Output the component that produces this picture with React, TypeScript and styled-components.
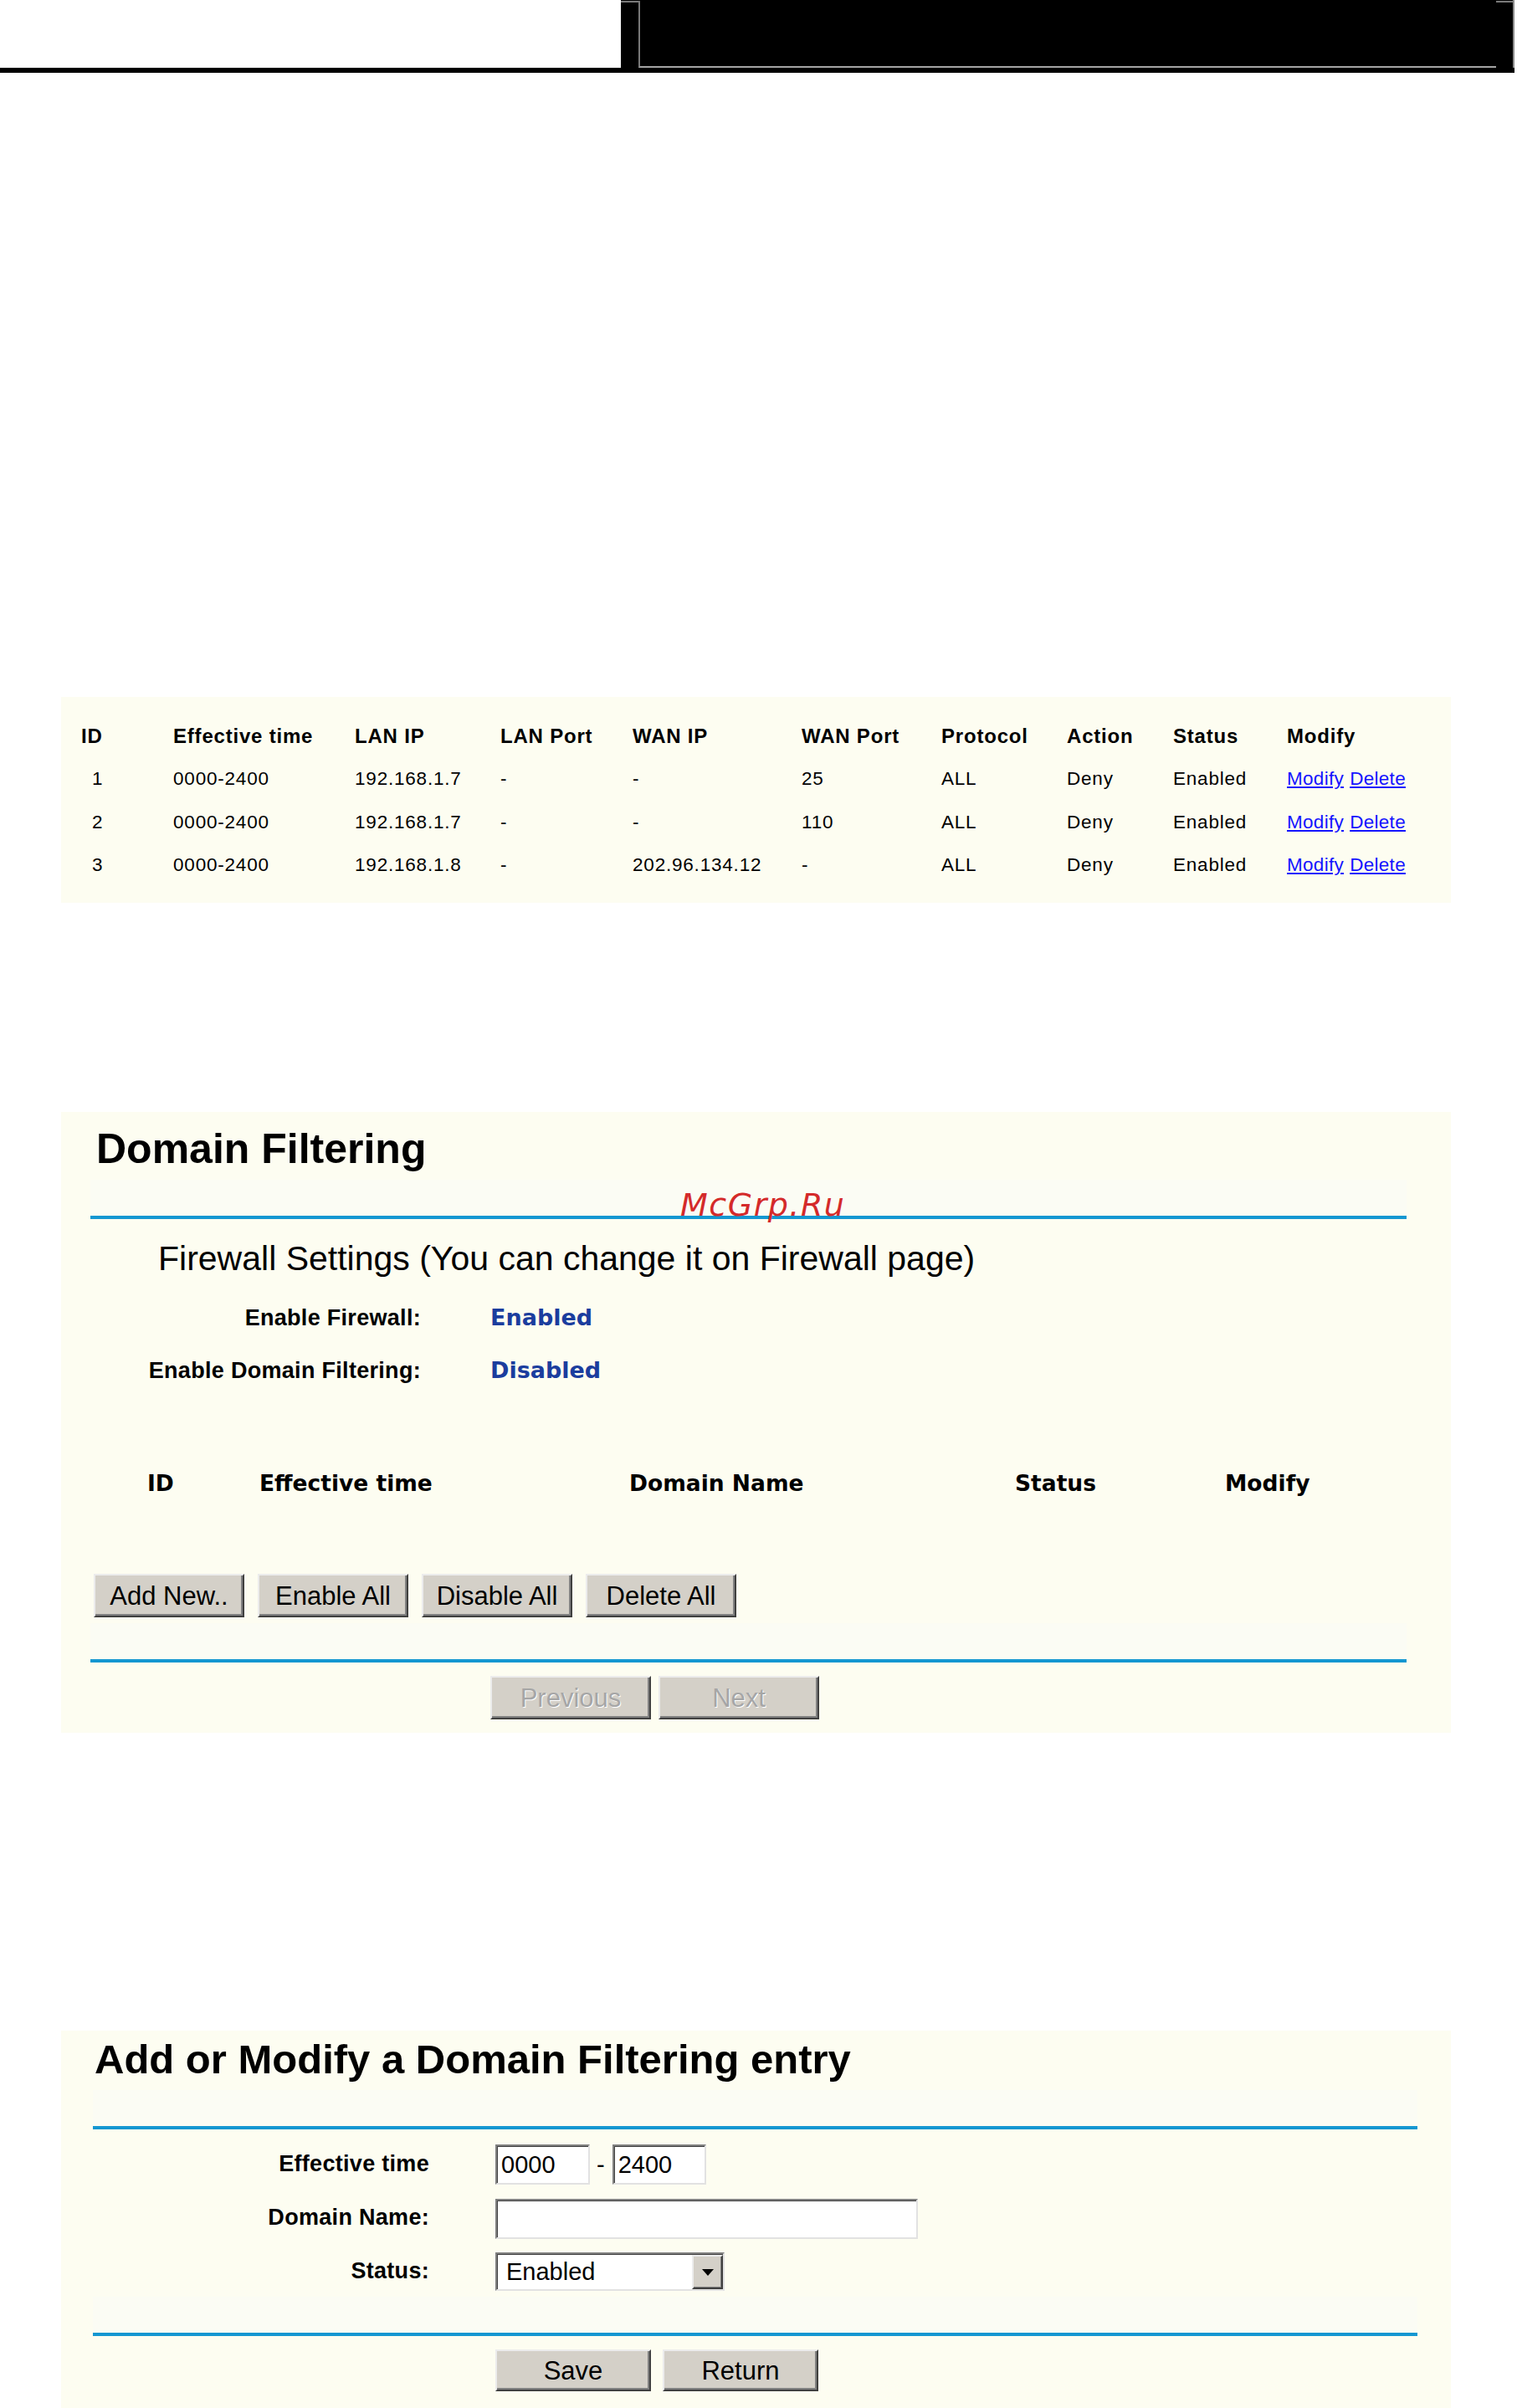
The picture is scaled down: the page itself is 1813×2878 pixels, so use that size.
import React from "react";
import styled, { createGlobalStyle } from "styled-components";

const SANS = `"Liberation Sans", Arial, sans-serif`;
const WIDE = `"DejaVu Sans", Verdana, sans-serif`;

const Global = createGlobalStyle`
  html, body { margin: 0; padding: 0; background: #fff; overflow: hidden; }
  body { font-family: ${SANS}; color: #000; }
  * { box-sizing: border-box; }
`;

const Page = styled.div`
  width: 1813px;
  height: 2878px;
`;

/* ---------- top header ---------- */
const TopBar = styled.header`
  display: flex;
  height: 81px;
`;
const TopBlank = styled.div`
  width: 742px;
`;
const TopBox = styled.div`
  position: relative;
  width: 1068px;
  background: #000;
  display: flex;
  padding: 1px 20px 0 21px;
  border-right: 2px solid #8a8a8a;
  &::before,
  &::after {
    content: "";
    position: absolute;
    top: 1px;
    height: 2px;
    background: #7a7a7a;
  }
  &::before { left: 0; width: 21px; }
  &::after { right: 0; width: 20px; }
`;
const TopFrame = styled.div`
  flex: 1;
  border-left: 2px solid #777;
  border-bottom: 2px solid #a4a4a4;
`;
const TopRule = styled.div`
  width: 1810px;
  height: 6px;
  background: #000;
`;

/* ---------- panels ---------- */
const Panel = styled.section<{ $mt: number; $h: number }>`
  position: relative;
  margin: ${(p) => p.$mt}px 0 0 73px;
  width: 1661px;
  height: ${(p) => p.$h}px;
  background: #fdfdf1;
`;

/* ---------- rule table (panel 1) ---------- */
const RuleTable = styled.div`
  display: grid;
  grid-template-columns: 110px 217px 174px 158px 202px 167px 150px 127px 136px 1fr;
  padding: 20.5px 0 0 24px;
`;
const HeadCell = styled.div`
  font: 700 24px/51.5px ${SANS};
  letter-spacing: 0.8px;
  white-space: nowrap;
`;
const DataCell = styled.div<{ $indent?: number }>`
  font: 400 22.5px/51.5px ${SANS};
  letter-spacing: 0.8px;
  white-space: nowrap;
  padding-left: ${(p) => p.$indent ?? 0}px;
`;
const RowLink = styled.a`
  color: #1414ff;
  text-decoration: underline;
  letter-spacing: 0.3px;
  cursor: pointer;
`;

/* ---------- shared page bits ---------- */
const PageTitle = styled.h1<{ $size: number; $pt: number; $pl: number }>`
  margin: 0;
  padding: ${(p) => p.$pt}px 0 0 ${(p) => p.$pl}px;
  font: 700 ${(p) => p.$size}px/60px ${SANS};
  white-space: nowrap;
`;
const Divider = styled.div<{ $ml: number; $w: number; $mt: number }>`
  margin: ${(p) => p.$mt}px 0 0 ${(p) => p.$ml}px;
  width: ${(p) => p.$w}px;
  height: 47px;
  background: #fbfcf4;
  border-bottom: 4px solid #1497d1;
`;
const Watermark = styled.span`
  position: absolute;
  top: 92px;
  left: 740px;
  font: italic 400 38px/38px ${WIDE};
  letter-spacing: 1.5px;
  color: #d42a2a;
  white-space: nowrap;
`;
const SubTitle = styled.h2`
  margin: 21.8px 0 0;
  padding-left: 116px;
  font: 400 41px/50px ${SANS};
  white-space: nowrap;
`;
const SettingList = styled.div`
  margin-top: 14px;
`;
const SettingRow = styled.div`
  display: flex;
  align-items: baseline;
  height: 63px;
`;
const SettingLabel = styled.span`
  width: 430px;
  flex: none;
  text-align: right;
  font: 700 27px/63px ${SANS};
  letter-spacing: 0.3px;
  white-space: nowrap;
`;
const SettingValue = styled.span`
  margin-left: 83px;
  font: 700 27px/63px ${WIDE};
  color: #1b3d9e;
`;
const ColumnHead = styled.div`
  display: flex;
  margin-top: 74px;
  padding-left: 103px;
  height: 60px;
`;
const ColumnTitle = styled.span<{ $w?: number }>`
  flex: none;
  width: ${(p) => (p.$w ? `${p.$w}px` : "auto")};
  font: 700 26.5px/60px ${WIDE};
  white-space: nowrap;
`;
const ButtonRow = styled.div<{ $mt: number; $pl: number; $gap: number }>`
  display: flex;
  gap: ${(p) => p.$gap}px;
  margin-top: ${(p) => p.$mt}px;
  padding-left: ${(p) => p.$pl}px;
`;
const WinButton = styled.button<{ $w: number; $h: number; $off?: boolean }>`
  width: ${(p) => p.$w}px;
  height: ${(p) => p.$h}px;
  flex: none;
  padding: 2px 0 0;
  background: #d4d0c8;
  border: 2px solid;
  border-color: #ececec #404040 #404040 #ececec;
  box-shadow: inset -2px -2px 0 #808080;
  font: 400 31px ${SANS};
  color: ${(p) => (p.$off ? "#a6a6a6" : "#000")};
  text-shadow: ${(p) => (p.$off ? "1px 1px 0 #fff" : "none")};
  white-space: nowrap;
  cursor: default;
`;

/* ---------- form (panel 3) ---------- */
const Form = styled.div`
  display: flex;
  flex-direction: column;
  gap: 16.5px;
  margin-top: 18px;
`;
const FormRow = styled.div<{ $h: number }>`
  display: flex;
  align-items: center;
  height: ${(p) => p.$h}px;
`;
const FormLabel = styled.span`
  width: 440px;
  flex: none;
  text-align: right;
  padding-bottom: 2px;
  font: 700 27px/1 ${SANS};
  letter-spacing: 0.3px;
  white-space: nowrap;
`;
const FormControls = styled.div`
  display: flex;
  align-items: center;
  margin-left: 79px;
`;
const TextInput = styled.input<{ $w: number }>`
  width: ${(p) => p.$w}px;
  height: 48px;
  padding: 0 0 0 5px;
  background: #fff;
  border: 2px solid;
  border-color: #808080 #e2e2e2 #e2e2e2 #808080;
  box-shadow: inset 1px 1px 0 #404040;
  font: 400 29px ${SANS};
  color: #000;
  outline: none;
`;
const TimeSep = styled.span`
  margin: 0 9px 0 8px;
  font: 400 29px ${SANS};
`;
const SelectBox = styled.div`
  width: 274px;
  height: 46px;
  display: flex;
  background: #fff;
  border: 2px solid;
  border-color: #808080 #e2e2e2 #e2e2e2 #808080;
  box-shadow: inset 1px 1px 0 #404040;
`;
const SelectText = styled.span`
  flex: 1;
  padding-left: 11px;
  font: 400 29px/42px ${SANS};
`;
const SelectArrow = styled.span`
  width: 37px;
  margin: 1px 0 0;
  display: flex;
  align-items: center;
  justify-content: center;
  background: #d4d0c8;
  border: 2px solid;
  border-color: #ececec #404040 #404040 #ececec;
  box-shadow: inset -1px -1px 0 #808080;
`;

const rules = [
  ["1", "0000-2400", "192.168.1.7", "-", "-", "25", "ALL", "Deny", "Enabled"],
  ["2", "0000-2400", "192.168.1.7", "-", "-", "110", "ALL", "Deny", "Enabled"],
  ["3", "0000-2400", "192.168.1.8", "-", "202.96.134.12", "-", "ALL", "Deny", "Enabled"],
];
const ruleHeads = ["ID", "Effective time", "LAN IP", "LAN Port", "WAN IP", "WAN Port", "Protocol", "Action", "Status", "Modify"];

export default function App() {
  return (
    <Page>
      <Global />
      <TopBar>
        <TopBlank />
        <TopBox>
          <TopFrame />
        </TopBox>
      </TopBar>
      <TopRule />

      <Panel $mt={746} $h={246}>
        <RuleTable>
          {ruleHeads.map((h) => (
            <HeadCell key={h}>{h}</HeadCell>
          ))}
          {rules.map((r) => (
            <React.Fragment key={r[0]}>
              {r.map((v, i) => (
                <DataCell key={i} $indent={i === 0 ? 13 : 0}>
                  {v}
                </DataCell>
              ))}
              <DataCell>
                <RowLink>Modify</RowLink> <RowLink>Delete</RowLink>
              </DataCell>
            </React.Fragment>
          ))}
        </RuleTable>
      </Panel>

      <Panel $mt={250} $h={742}>
        <PageTitle $size={50} $pt={14} $pl={42}>Domain Filtering</PageTitle>
        <Divider $ml={35} $w={1573} $mt={7} />
        <Watermark>McGrp.Ru</Watermark>
        <SubTitle>Firewall Settings (You can change it on Firewall page)</SubTitle>
        <SettingList>
          <SettingRow>
            <SettingLabel>Enable Firewall:</SettingLabel>
            <SettingValue>Enabled</SettingValue>
          </SettingRow>
          <SettingRow>
            <SettingLabel>Enable Domain Filtering:</SettingLabel>
            <SettingValue>Disabled</SettingValue>
          </SettingRow>
        </SettingList>
        <ColumnHead>
          <ColumnTitle $w={134}>ID</ColumnTitle>
          <ColumnTitle $w={442}>Effective time</ColumnTitle>
          <ColumnTitle $w={461}>Domain Name</ColumnTitle>
          <ColumnTitle $w={251}>Status</ColumnTitle>
          <ColumnTitle>Modify</ColumnTitle>
        </ColumnHead>
        <ButtonRow $mt={78} $pl={39} $gap={16}>
          <WinButton $w={180} $h={52}>Add New..</WinButton>
          <WinButton $w={180} $h={52}>Enable All</WinButton>
          <WinButton $w={180} $h={52}>Disable All</WinButton>
          <WinButton $w={180} $h={52}>Delete All</WinButton>
        </ButtonRow>
        <Divider $ml={35} $w={1573} $mt={7} />
        <ButtonRow $mt={16} $pl={513} $gap={9}>
          <WinButton $w={192} $h={52} $off>Previous</WinButton>
          <WinButton $w={192} $h={52} $off>Next</WinButton>
        </ButtonRow>
      </Panel>

      <Panel $mt={356} $h={451}>
        <PageTitle $size={49} $pt={4} $pl={40}>Add or Modify a Domain Filtering entry</PageTitle>
        <Divider $ml={38} $w={1583} $mt={7} />
        <Form>
          <FormRow $h={48}>
            <FormLabel>Effective time</FormLabel>
            <FormControls>
              <TextInput $w={113} defaultValue="0000" readOnly />
              <TimeSep>-</TimeSep>
              <TextInput $w={112} defaultValue="2400" readOnly />
            </FormControls>
          </FormRow>
          <FormRow $h={48}>
            <FormLabel>Domain Name:</FormLabel>
            <FormControls>
              <TextInput $w={505} defaultValue="" readOnly />
            </FormControls>
          </FormRow>
          <FormRow $h={46}>
            <FormLabel>Status:</FormLabel>
            <FormControls>
              <SelectBox>
                <SelectText>Enabled</SelectText>
                <SelectArrow>
                  <svg width="14" height="8" viewBox="0 0 14 8">
                    <path d="M0 0 H14 L7 8 Z" fill="#000" />
                  </svg>
                </SelectArrow>
              </SelectBox>
            </FormControls>
          </FormRow>
        </Form>
        <Divider $ml={38} $w={1583} $mt={7} />
        <ButtonRow $mt={16} $pl={519} $gap={14}>
          <WinButton $w={186} $h={50}>Save</WinButton>
          <WinButton $w={186} $h={50}>Return</WinButton>
        </ButtonRow>
      </Panel>
    </Page>
  );
}
